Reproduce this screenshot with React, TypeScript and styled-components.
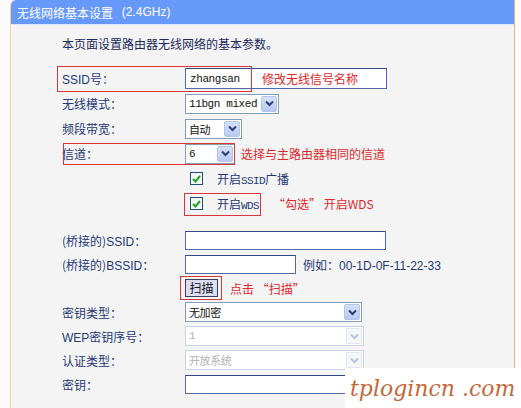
import styled, { createGlobalStyle } from 'styled-components';

const GlobalStyle = createGlobalStyle`
  html, body {
    margin: 0;
    padding: 0;
    background: #fbfbfb;
  }
  body {
    width: 521px;
    height: 408px;
    overflow: hidden;
    font-family: "Noto Sans CJK SC", "Liberation Sans", sans-serif;
    font-size: 12px;
  }
`;

const MONO = '"Liberation Mono", "Noto Sans CJK SC", monospace';
const CJK = '"Noto Sans CJK SC", "Liberation Sans", sans-serif';

// latin parts of the labels
const Lat = styled.span`
  font-family: "Liberation Sans", sans-serif;
  font-size: 12px;
`;

// narrow latin, 6px a char like the router's SimSun
const Narrow = styled.span`
  font-family: "Liberation Mono", monospace;
  font-size: 11px;
  letter-spacing: -0.6px;
`;

function Chevron({ disabled }: { disabled?: boolean }) {
  return (
    <svg width='9' height='7' viewBox='0 0 9 7'>
      <path
        d='M1 1.5 L4.5 5 L8 1.5'
        fill='none'
        stroke={disabled ? '#b9c6d8' : '#2b3f7a'}
        strokeWidth='2'
      />
    </svg>
  );
}

function Select({
  value,
  width,
  disabled = false,
}: {
  value: string;
  width: number;
  disabled?: boolean;
}) {
  return (
    <SelectBox $width={width} $disabled={disabled}>
      <SelectValue $disabled={disabled}>{value}</SelectValue>
      <Arrow $disabled={disabled}>
        <Chevron disabled={disabled} />
      </Arrow>
    </SelectBox>
  );
}

function Check({ children }: { children: React.ReactNode }) {
  return (
    <CheckWrap>
      <CheckBox>
        <svg width='9' height='8' viewBox='0 0 9 8'>
          <path d='M1 4 L3.5 6.5 L8 1' fill='none' stroke='#1fa32a' strokeWidth='2' />
        </svg>
      </CheckBox>
      <CheckText>{children}</CheckText>
    </CheckWrap>
  );
}

export default function App() {
  return (
    <Page>
      <GlobalStyle />
      <Panel>
        <Header>
          无线网络基本设置 <Lat>(2.4GHz)</Lat>
        </Header>
        <Body>
          <Intro>本页面设置路由器无线网络的基本参数。</Intro>
          <Group>
            <Row $h={25}>
              <Label>
                <Lat>SSID</Lat>号：
              </Label>
              <Field>
                <TextInput $width={202} $height={21} defaultValue='zhangsan' readOnly />
                <InsideNote>修改无线信号名称</InsideNote>
              </Field>
              <Outline style={{ left: -5, top: 0, width: 195, height: 26 }} />
            </Row>
            <Row $h={25}>
              <Label>无线模式：</Label>
              <Field>
                <Select value='11bgn mixed' width={94} />
              </Field>
            </Row>
            <Row $h={25}>
              <Label>频段带宽：</Label>
              <Field>
                <Select value='自动' width={57} />
              </Field>
            </Row>
            <Row $h={25}>
              <Label>信道：</Label>
              <Field>
                <Select value='6' width={50} />
                <Note>选择与主路由器相同的信道</Note>
              </Field>
              <Outline style={{ left: 1, top: 2, width: 172, height: 22 }} />
            </Row>
            <Row $h={25}>
              <Label />
              <Field>
                <Check>
                  开启<Narrow>SSID</Narrow>广播
                </Check>
              </Field>
            </Row>
            <Row $h={25}>
              <Label />
              <Field>
                <Check>
                  开启<Narrow>WDS</Narrow>
                </Check>
                <Note $gap={14}>“勾选” 开启WDS</Note>
              </Field>
              <Outline style={{ left: 122, top: 2, width: 77, height: 23 }} />
            </Row>
          </Group>

          <Group $top={12}>
            <Row $h={24}>
              <Label>
                (桥接的)<Lat>SSID</Lat>：
              </Label>
              <Field>
                <TextInput $width={201} $height={19} readOnly />
              </Field>
            </Row>
            <Row $h={24}>
              <Label>
                (桥接的)<Lat>BSSID</Lat>：
              </Label>
              <Field>
                <TextInput $width={111} $height={19} readOnly />
                <Hint>
                  例如：<Lat>00-1D-0F-11-22-33</Lat>
                </Hint>
              </Field>
            </Row>
            <Row $h={24}>
              <Label />
              <Field>
                <ScanButton>扫描</ScanButton>
                <Note $gap={12}>点击 “扫描”</Note>
              </Field>
              <Outline style={{ left: 118, top: 0, width: 42, height: 24 }} />
            </Row>
            <Row $h={24}>
              <Label>密钥类型：</Label>
              <Field>
                <Select value='无加密' width={177} />
              </Field>
            </Row>
            <Row $h={24}>
              <Label>
                <Lat>WEP</Lat>密钥序号：
              </Label>
              <Field>
                <Select value='1' width={179} disabled />
              </Field>
            </Row>
            <Row $h={24}>
              <Label>认证类型：</Label>
              <Field>
                <Select value='开放系统' width={179} disabled />
              </Field>
            </Row>
            <Row $h={24}>
              <Label>密钥：</Label>
              <Field>
                <TextInput $width={202} $height={19} readOnly />
              </Field>
            </Row>
          </Group>
        </Body>
      </Panel>
      <Watermark>tplogincn .com</Watermark>
    </Page>
  );
}

const Page = styled.div`
  position: relative;
  width: 521px;
  height: 408px;
  padding-left: 10px;
  box-sizing: border-box;
`;

const Panel = styled.div`
  width: 505px;
  height: 408px;
  display: flex;
  flex-direction: column;
  background: #f4f4f4;
  border-left: 1px solid #f6cf98;
  border-right: 1px solid #f0b46a;
  border-top-left-radius: 6px;
  box-sizing: border-box;
  overflow: hidden;
`;

const Header = styled.div`
  height: 24px;
  display: flex;
  align-items: center;
  gap: 6px;
  padding-left: 6px;
  background: #6699f9;
  border-bottom: 1px solid #dbe6fb;
  color: #ffffff;
  font-family: ${CJK};
  font-size: 12px;
  white-space: pre;
`;

const Body = styled.div`
  display: flex;
  flex-direction: column;
  padding: 9px 0 0 51px;
`;

const Intro = styled.div`
  height: 20px;
  line-height: 20px;
  margin-bottom: 12px;
  color: #1b2a5c;
  font-family: ${CJK};
  font-size: 12px;
`;

const Group = styled.div<{ $top?: number }>`
  display: flex;
  flex-direction: column;
  margin-top: ${({ $top }) => $top ?? 0}px;
`;

const Row = styled.div<{ $h: number }>`
  position: relative;
  height: ${({ $h }) => $h}px;
  display: grid;
  grid-template-columns: 123px 1fr;
  align-items: center;
`;

const Label = styled.div`
  color: #1f3877;
  font-family: ${CJK};
  font-size: 12px;
  white-space: nowrap;
`;

const Field = styled.div`
  position: relative;
  display: flex;
  align-items: center;
`;

const Outline = styled.div`
  position: absolute;
  border: 1.5px solid #d9363a;
  box-sizing: border-box;
  pointer-events: none;
`;

const TextInput = styled.input<{ $width: number; $height: number }>`
  width: ${({ $width }) => $width}px;
  height: ${({ $height }) => $height}px;
  box-sizing: border-box;
  margin: 0;
  padding: 0 4px;
  border: 1px solid #4f6aa6;
  border-top-color: #33488a;
  background: #ffffff;
  color: #111111;
  font-family: "Liberation Mono", monospace;
  font-size: 11px;
  letter-spacing: -0.4px;
  outline: none;
`;

const InsideNote = styled.span`
  position: absolute;
  left: 77px;
  top: 50%;
  transform: translateY(-52%);
  color: #e0262a;
  font-family: ${CJK};
  font-size: 12px;
`;

const Note = styled.span<{ $gap?: number }>`
  margin-left: ${({ $gap }) => $gap ?? 6}px;
  color: #e0262a;
  font-family: ${CJK};
  font-size: 12px;
  white-space: nowrap;
`;

const Hint = styled.span`
  margin-left: 7px;
  color: #1f3877;
  font-family: ${CJK};
  font-size: 12px;
  white-space: nowrap;
`;

const SelectBox = styled.div<{ $width: number; $disabled: boolean }>`
  width: ${({ $width }) => $width}px;
  height: 20px;
  box-sizing: border-box;
  display: flex;
  align-items: center;
  justify-content: space-between;
  background: #ffffff;
  border: 1px solid ${({ $disabled }) => ($disabled ? '#c9d3e2' : '#7f9db9')};
`;

const SelectValue = styled.span<{ $disabled: boolean }>`
  padding-left: 3px;
  color: ${({ $disabled }) => ($disabled ? '#b2b2b2' : '#111111')};
  font-family: ${MONO};
  font-size: 11px;
  letter-spacing: -0.4px;
  white-space: nowrap;
`;

const Arrow = styled.div<{ $disabled: boolean }>`
  width: 16px;
  height: 16px;
  margin-right: 1px;
  flex-shrink: 0;
  box-sizing: border-box;
  display: flex;
  align-items: center;
  justify-content: center;
  border: 1px solid ${({ $disabled }) => ($disabled ? '#e2e8f0' : '#b4c6e6')};
  border-radius: 2px;
  background: ${({ $disabled }) =>
    $disabled ? '#f4f6f9' : 'linear-gradient(#d6e2fb, #b7c9ef)'};
`;

const CheckWrap = styled.div`
  display: flex;
  align-items: center;
  margin-left: 5px;
  gap: 14px;
`;

const CheckBox = styled.div`
  width: 13px;
  height: 13px;
  box-sizing: border-box;
  display: flex;
  align-items: center;
  justify-content: center;
  border: 1px solid #1c5180;
  background: #f3f6f3;
`;

const CheckText = styled.span`
  color: #1f3877;
  font-family: ${CJK};
  font-size: 12px;
  white-space: nowrap;
`;

const ScanButton = styled.button`
  width: 33px;
  height: 18px;
  margin: 0;
  padding: 0;
  box-sizing: border-box;
  border: 1px solid #3a3f5c;
  background: #dcdcf2;
  color: #111111;
  font-family: ${CJK};
  font-size: 12px;
  line-height: 16px;
`;

const Watermark = styled.div`
  position: absolute;
  left: 345px;
  top: 368px;
  width: 176px;
  height: 40px;
  display: flex;
  align-items: center;
  padding-left: 5px;
  box-sizing: border-box;
  background: #ffffff;
  color: #c2683a;
  font-family: "DejaVu Serif", serif;
  font-style: italic;
  font-size: 22px;
  white-space: nowrap;
`;
